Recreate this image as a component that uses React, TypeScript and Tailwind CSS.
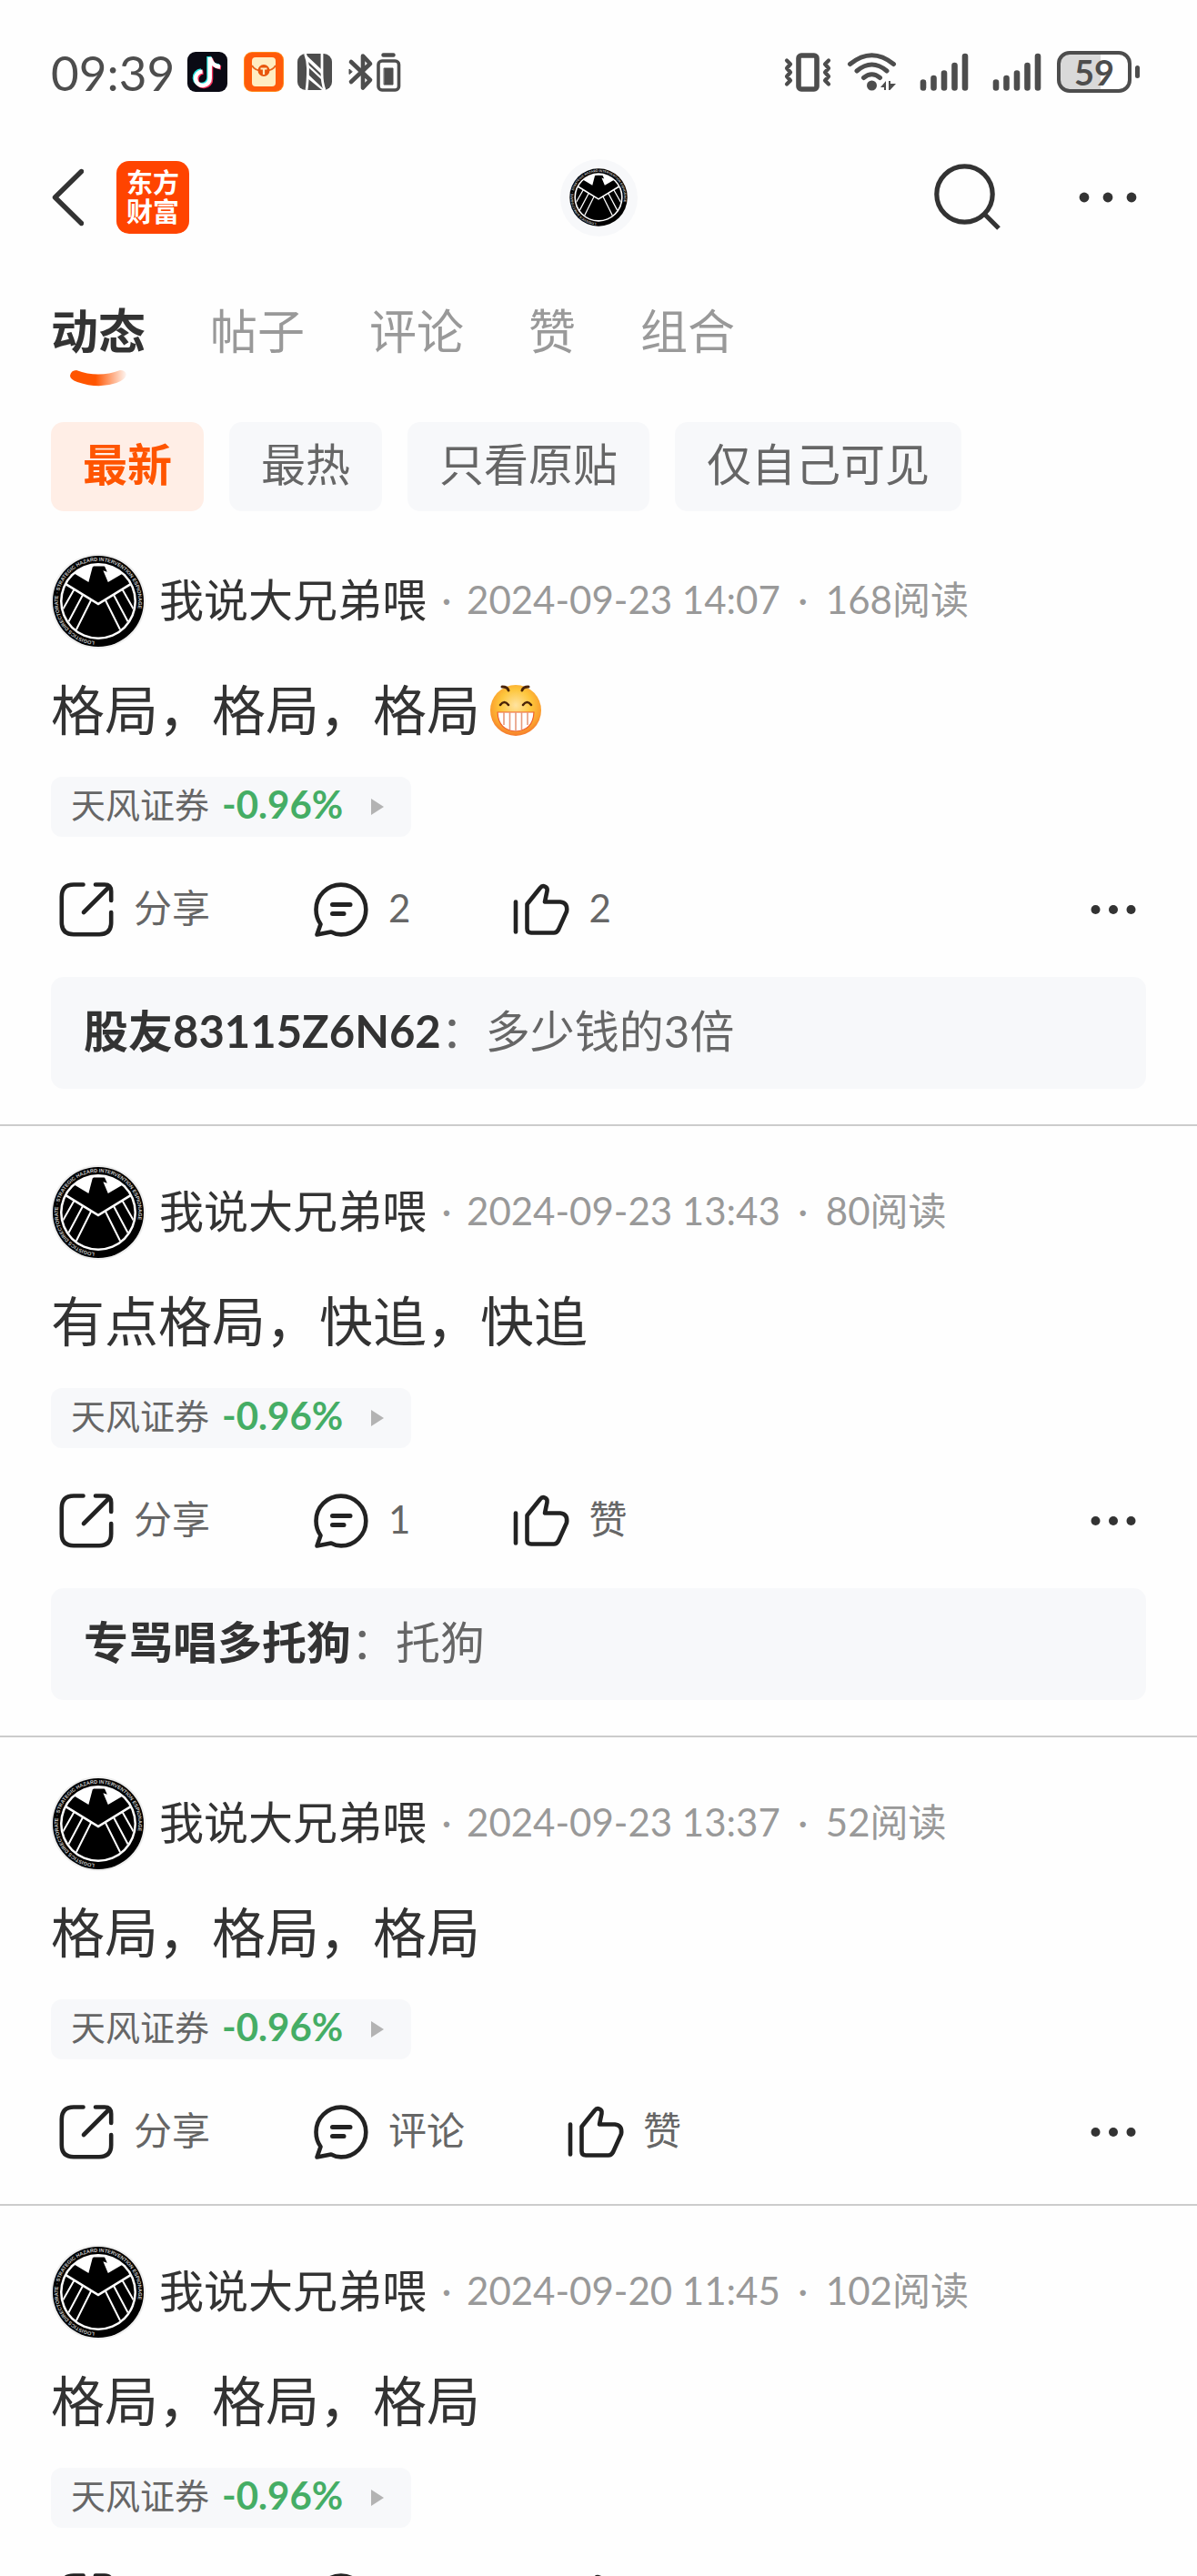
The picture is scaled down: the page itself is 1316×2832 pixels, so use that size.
import { useId } from "react";

type Post = {
  id: number;
  time: string;
  reads: string;
  text: string;
  grin?: boolean;
  comments: string;
  likes: string;
  reply?: { user: string; text: string };
};

const USER = "我说大兄弟喂";

const POSTS: Post[] = [
  {
    id: 1,
    time: "2024-09-23 14:07",
    reads: "168阅读",
    text: "格局，格局，格局",
    grin: true,
    comments: "2",
    likes: "2",
    reply: { user: "股友83115Z6N62", text: "多少钱的3倍" },
  },
  {
    id: 2,
    time: "2024-09-23 13:43",
    reads: "80阅读",
    text: "有点格局，快追，快追",
    comments: "1",
    likes: "赞",
    reply: { user: "专骂唱多托狗", text: "托狗" },
  },
  {
    id: 3,
    time: "2024-09-23 13:37",
    reads: "52阅读",
    text: "格局，格局，格局",
    comments: "评论",
    likes: "赞",
  },
  {
    id: 4,
    time: "2024-09-20 11:45",
    reads: "102阅读",
    text: "格局，格局，格局",
    comments: "评论",
    likes: "赞",
  },
];

const TABS = ["动态", "帖子", "评论", "赞", "组合"];
const FILTERS = ["最新", "最热", "只看原贴", "仅自己可见"];

function Emblem({ className }: { className: string }) {
  const id = useId();
  return (
    <svg viewBox="0 0 104 104" className={className} aria-hidden="true">
      <defs>
        <clipPath id={`${id}c`}>
          <circle cx="52" cy="52" r="39.5" />
        </clipPath>
        <path id={`${id}p`} d="M52 96.2A44.2 44.2 0 0 1 52 7.8A44.2 44.2 0 0 1 52 96.2" />
      </defs>
      <circle cx="52" cy="52" r="50" fill="#000" />
      <circle cx="52" cy="52" r="42" fill="#fff" />
      <text fontSize="5.6" fontWeight="700" fill="#c8c8c8" fontFamily="Liberation Sans, sans-serif">
        <textPath href={`#${id}p`} startOffset="4">
          LOGISTICS DIRECTORATE · STRATEGIC HAZARD INTERVENTION ESPIONAGE
        </textPath>
      </text>
      <g clipPath={`url(#${id}c)`}>
        <path
          d="M45.7 14.4L47 13.6H59L61.8 19.8L57.4 18.2L62.8 31L79 21.6L86 30L87 32L52 53.5L17 32L19 29L25.6 21.6L41.4 31Z"
          fill="#000"
        />
        <path d="M8 29.5L52 56.5L96 29.5V104H8Z" fill="#000" />
        <g stroke="#fff" strokeWidth="2" fill="none">
          <path d="M25.5 39L13 61M35 45L18 77M44.500 50L26 87" />
          <path d="M78.500 39L91 61M69 45L86 77M59.500 50L78 87" />
        </g>
      </g>
    </svg>
  );
}

function Grin() {
  const id = useId();
  return (
    <svg viewBox="0 0 58 58" className="size-[58px] shrink-0" role="img" aria-label="呲牙">
      <defs>
        <radialGradient id={id} cx="0.5" cy="0.4" r="0.62">
          <stop offset="0" stopColor="#ffe3a0" />
          <stop offset="0.5" stopColor="#fdc63c" />
          <stop offset="0.8" stopColor="#fba02e" />
          <stop offset="1" stopColor="#f4702c" />
        </radialGradient>
      </defs>
      <circle cx="29" cy="29" r="28" fill={`url(#${id})`} />
      <g fill="none" stroke="#4a2408" strokeWidth="2.6" strokeLinecap="round">
        <path d="M14 3q6 0 7 4M43 3q-6 0-7 4" strokeWidth="3" />
        <path d="M12 23q4.500-6 9 0M37 23q4.500-6 9 0" />
      </g>
      <path d="M9 31H49Q48 51 29 52Q10 51 9 31Z" fill="#fff" stroke="#f0602c" strokeWidth="1.200" />
      <path d="M16 31v14M22.500 31v19M29 31v21M35.500 31v19M42 31v14" stroke="#e79a7c" strokeWidth="1.600" />
    </svg>
  );
}

function Dots({ r, step }: { r: number; step: number }) {
  return (
    <svg viewBox="0 0 64 64" className="size-16" fill="#333" aria-hidden="true">
      <circle cx={32 - step} cy="32" r={r} />
      <circle cx="32" cy="32" r={r} />
      <circle cx={32 + step} cy="32" r={r} />
    </svg>
  );
}

function ShareIcon() {
  return (
    <svg viewBox="0 0 64 64" className="size-16" fill="none" stroke="#222" strokeWidth="4.600" strokeLinecap="round" strokeLinejoin="round" aria-hidden="true">
      <path d="M28.500 4.500H18Q4.800 4.500 4.800 18V46Q4.800 59.200 18 59.200H46Q59.200 59.200 59.200 46V35" />
      <path d="M42 4.500H52Q59.200 4.500 59.200 12V22" />
      <path d="M57 7L29 35" />
    </svg>
  );
}

function CommentIcon() {
  return (
    <svg viewBox="0 0 64 64" className="size-16" fill="none" stroke="#222" strokeWidth="4.600" strokeLinecap="round" strokeLinejoin="round" aria-hidden="true">
      <path d="M5.500 59.500L9.500 48C6.200 43.500 4.500 38 4.500 32A27.400 27.400 0 1 1 32 59.400C28 59.400 24.500 58.500 21 56.500Z" />
      <path d="M22.500 26.500H42M22.500 36.500H35" strokeWidth="5" />
    </svg>
  );
}

function LikeIcon() {
  return (
    <svg viewBox="0 0 64 64" className="size-16" fill="none" stroke="#222" strokeWidth="4.600" strokeLinecap="round" strokeLinejoin="round" aria-hidden="true">
      <path d="M4 23.500V56.500" />
      <path d="M16.500 26L31 8C33.500 4.500 39.500 6.500 38.500 11.500L36 23.500H53Q61.500 24.500 60 34L51 54Q49 57.500 46 57.500H21Q16.500 57.500 16.500 53Z" />
    </svg>
  );
}

function Signal() {
  return (
    <svg viewBox="0 0 54 44" className="h-11 w-[54px]" stroke="#4d4d4d" strokeWidth="6.600" strokeLinecap="round" aria-hidden="true">
      <path d="M4 33.500V39.500M15.500 29V39.500M27 23.500V39.500M38.500 15V39.500M50 5V39.500" />
    </svg>
  );
}

function StatusBar() {
  return (
    <div className="flex h-[158px] items-center justify-between pr-[63px] pl-14 text-[#4d4d4d]">
      <div className="flex items-center">
        <span className="w-[134px] text-[53px] leading-none">09:39</span>
        <svg viewBox="0 0 44 44" className="ml-4 size-11" aria-hidden="true">
          <rect width="44" height="44" rx="9" fill="#0a0a14" />
          <g fill="none" strokeWidth="4.500">
            <path d="M23.500 5V28A7.800 7.800 0 1 1 15 20.500M23.500 5Q25 14.500 35 15.500" stroke="#25e5e0" />
            <path d="M26 7.500V30A7.800 7.800 0 1 1 17.500 22.500M26 7.500Q27.500 16.500 37 17.500" stroke="#f5305a" />
            <path d="M24.700 6V29A7.800 7.800 0 1 1 16.500 21.500M24.700 6Q26.500 15.500 36 16.500" stroke="#fff" />
          </g>
        </svg>
        <svg viewBox="0 0 44 44" className="ml-[18px] size-11" aria-hidden="true">
          <rect width="44" height="44" rx="9" fill="#ff8a1c" />
          <rect x="1" y="1" width="42" height="42" rx="8" fill="#ff5a0a" />
          <rect x="9" y="6" width="26" height="32" rx="4" fill="#ffedc2" />
          <path d="M9 15Q12 21 22 21Q32 21 35 15" fill="none" stroke="#e8641c" strokeWidth="1.800" />
          <circle cx="22" cy="20.500" r="6.500" fill="#e8560c" />
          <path d="M18.500 18.500H25.500M22 18.500V25" stroke="#ffedc2" strokeWidth="2.200" />
        </svg>
        <svg viewBox="0 0 40 40" className="ml-3.5 size-10" aria-hidden="true">
          <rect x="1" width="38" height="40" rx="9" fill="#4d4d4d" />
          <path d="M9.500 0Q12.500 8 12.500 16Q12.500 30 11 40M28 0V22Q28 32 31 40" fill="none" stroke="#fff" strokeWidth="2.800" />
          <path d="M9 0L28 18V23L12 8Z" fill="#fff" />
          <path d="M12 22L31 40L28 40L12 27Z" fill="#fff" />
          <path d="M13 12L28 26V29L13 15Z" fill="#fff" />
        </svg>
        <svg viewBox="0 0 60 44" className="ml-4 h-11 w-[60px]" fill="none" stroke="#4d4d4d" strokeLinecap="round" strokeLinejoin="round" aria-hidden="true">
          <path d="M4 11L25 31L17 39.500V4.500L25 13L4 33" strokeWidth="4.600" />
          <path d="M2 19.500V24.500L5 22Z" fill="#4d4d4d" strokeWidth="1" />
          <rect x="34" y="10" width="22.500" height="32" rx="4" strokeWidth="3.600" />
          <path d="M39.500 3.500H50.500" strokeWidth="4.400" />
          <rect x="40.500" y="18" width="9.500" height="18" fill="#4d4d4d" strokeWidth="1" />
        </svg>
      </div>
      <div className="flex items-center">
        <svg viewBox="0 0 52 44" className="h-11 w-[52px]" fill="none" stroke="#4d4d4d" strokeLinecap="round" strokeLinejoin="round" aria-hidden="true">
          <rect x="16" y="4" width="20" height="37" rx="3" strokeWidth="5.600" />
          <path d="M3 9.500L7 13.500L3 18L7 22.500L3 27L7 31.500L3 35.500M49 9.500L45 13.500L49 18L45 22.500L49 27L45 31.500L49 35.500" strokeWidth="4.200" />
        </svg>
        <svg viewBox="0 0 56 44" className="ml-[17px] h-11 w-14" fill="none" stroke="#4d4d4d" strokeWidth="5" strokeLinecap="round" aria-hidden="true">
          <path d="M3.500 13.500Q27.500-6 51.500 13.500M11 21Q27.500 7 44 21M18.500 28.500Q27.500 21 36.500 28.500" />
          <circle cx="27.500" cy="37" r="5.500" fill="#4d4d4d" stroke="none" />
          <path d="M43 32V42H41V39H37ZM46 42V32H48V35H54L47.500 42Z" fill="#4d4d4d" stroke="none" />
        </svg>
        <div className="ml-6 flex gap-[26px]">
          <Signal />
          <Signal />
        </div>
        <div className="ml-[17px] flex h-[46px] w-[82px] items-center justify-center rounded-[14px] border-4 border-[#4d4d4d] bg-linear-to-r from-[#d9d9d9] from-59% to-white to-59% font-[Lato,sans-serif] text-[38px] leading-none font-bold">
          59
        </div>
        <div className="ml-1 h-3.5 w-[5px] rounded-full bg-[#4d4d4d]" />
      </div>
    </div>
  );
}

function Header() {
  return (
    <header className="grid h-[118px] grid-cols-[1fr_auto_1fr] items-center px-14">
      <div className="flex items-center">
        <button aria-label="返回">
          <svg viewBox="0 0 36 64" className="h-16 w-9" fill="none" stroke="#333" strokeWidth="5.400" strokeLinecap="round" strokeLinejoin="round" aria-hidden="true">
            <path d="M33.500 3.500L4.500 32L33.500 60.500" />
          </svg>
        </button>
        <a
          href="#home"
          className="ml-9 flex size-20 flex-col items-center justify-center rounded-[14px] bg-[#ff4400] text-[29px] leading-8 font-bold text-white"
        >
          <span>东方</span>
          <span>财富</span>
        </a>
      </div>
      <a href="#profile" aria-label={USER} className="flex size-[85px] items-center justify-center rounded-full bg-[#f7f8fa]">
        <Emblem className="size-[66px]" />
      </a>
      <div className="flex items-center justify-end">
        <button aria-label="搜索">
          <svg viewBox="0 0 76 76" className="size-[76px]" fill="none" stroke="#333" strokeWidth="5.200" aria-hidden="true">
            <circle cx="35.500" cy="34.500" r="30.700" />
            <path d="M57 56L73 72" />
          </svg>
        </button>
        <button aria-label="更多" className="mr-2.5 ml-[85px]">
          <Dots r={5.4} step={26} />
        </button>
      </div>
    </header>
  );
}

function PostCard({ post }: { post: Post }) {
  return (
    <article className="border-b-2 border-[#ccc] px-14 pt-[43px] pb-[39px]">
      <div className="flex items-center">
        <a href="#profile" aria-label={USER} className="size-[104px] rounded-full bg-[#eee]">
          <Emblem className="size-[104px]" />
        </a>
        <a href="#profile" className="ml-[15px] pb-1 text-[49px] leading-[72px]">{USER}</a>
        <div className="flex pb-1 text-[42px] leading-[60px] text-[#999]">
          <span className="w-11 text-center">·</span>
          <time>{post.time}</time>
          <span className="w-[50px] text-center">·</span>
          <span>{post.reads}</span>
        </div>
      </div>
      <p className="mt-7 flex items-center gap-2.5 text-[59px] leading-20">
        {post.text}
        {post.grin && <Grin />}
      </p>
      <a href="#stock" className="mt-[33px] inline-flex h-[66px] items-center rounded-xl bg-[#f7f8fa] pr-[30px] pl-[22px] align-top text-[38px] leading-none text-[#666]">
        <span className="pb-1.5">天风证券</span>
        <span className="ml-3.5 pb-1.5 text-[42px] font-bold text-[#45ad65]">-0.96%</span>
        <svg viewBox="0 0 14 18" className="ml-[31px] h-[18px] w-3.5" fill="#b3b3b3" aria-hidden="true">
          <path d="M0 0L14 9L0 18Z" />
        </svg>
      </a>
      <div className="mt-[50px] flex h-[60px] items-center pl-[7px] text-[42px] leading-[56px] text-[#666]">
        <div className="flex items-center gap-28">
          <button className="flex items-center gap-5"><ShareIcon /><span className="pb-1">分享</span></button>
          <button className="flex items-center gap-5"><CommentIcon /><span className="pb-1">{post.comments}</span></button>
          <button className="flex items-center gap-5"><LikeIcon /><span className="pb-1">{post.likes}</span></button>
        </div>
        <button aria-label="更多操作" className="mr-1 ml-auto"><Dots r={5} step={19.5} /></button>
      </div>
      {post.reply ? (
        <div className="mt-11 rounded-[14px] bg-[#f7f8fa] px-9 pt-[23px] pb-7 text-[49px] leading-[72px] text-[#666]">
          <span className="font-bold text-[#333]">{post.reply.user}</span>：{post.reply.text}
        </div>
      ) : (
        <div className="h-2.5" />
      )}
    </article>
  );
}

export default function App() {
  return (
    <div
      lang="zh-CN"
      className="flex h-screen flex-col overflow-hidden bg-[#fefefe] font-[Lato,'Noto_Sans_CJK_SC',sans-serif] text-[#333]"
    >
      <StatusBar />
      <Header />
      <nav className="flex gap-[71px] px-14 pt-[54px] text-[52px] leading-[68px] text-[#999]">
        {TABS.map((tab, i) =>
          i === 0 ? (
            <button key={tab} aria-current="page" className="flex flex-col items-center font-bold text-[#333]">
              {tab}
              <svg viewBox="0 0 64 18" className="mt-[9px] h-[18px] w-16" aria-hidden="true">
                <defs>
                  <linearGradient id="smile" x1="0" x2="1" y1="0" y2="0">
                    <stop offset="0.45" stopColor="#ff5500" />
                    <stop offset="1" stopColor="#ff5500" stopOpacity="0.05" />
                  </linearGradient>
                </defs>
                <path d="M8 0Q32 9 56 0Q62 0 63 5Q61 11 52 14Q32 21 9 13Q1 10 1 6Q2 0 8 0Z" fill="url(#smile)" />
              </svg>
            </button>
          ) : (
            <button key={tab} className="self-start">{tab}</button>
          ),
        )}
      </nav>
      <div className="flex gap-7 px-14 pt-[39px] pb-1 text-[49px] leading-[72px] text-[#666]">
        {FILTERS.map((f, i) => (
          <button
            key={f}
            className={
              i === 0
                ? "rounded-[14px] bg-[#ffeee6] px-[35px] pt-2.5 pb-4 font-bold text-[#ff5500]"
                : "rounded-[14px] bg-[#f7f8fa] px-[35px] pt-2.5 pb-4"
            }
          >
            {f}
          </button>
        ))}
      </div>
      <main className="min-h-0 flex-1 overflow-y-auto [scrollbar-width:none]">
        {POSTS.map((p) => (
          <PostCard key={p.id} post={p} />
        ))}
      </main>
    </div>
  );
}
